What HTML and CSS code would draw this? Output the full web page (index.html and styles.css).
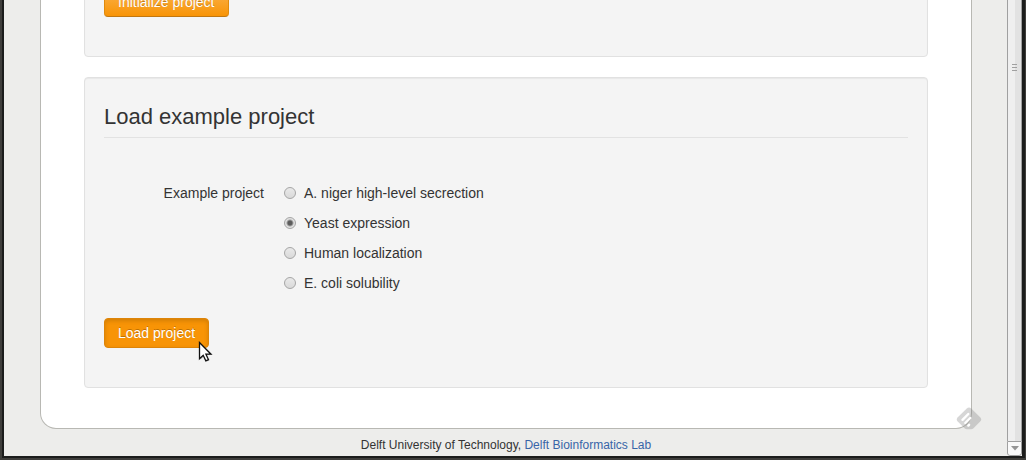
FILE: index.html
```
<!DOCTYPE html>
<html lang="en">
<head>
<meta charset="utf-8">
<title>Load example project</title>
<link rel="stylesheet" href="styles.css">
</head>
<body>
<div class="window">
  <div class="page">
    <main class="card">
      <section class="well">
        <form class="form">
          <button class="btn" type="button">Initialize project</button>
        </form>
      </section>
      <section class="well">
        <form class="form">
          <h2 class="legend">Load example project</h2>
          <div class="control-group" role="radiogroup" aria-labelledby="example-label">
            <div class="control-label" id="example-label">Example project</div>
            <div class="controls">
              <label class="radio"><input type="radio" name="example"> A. niger high-level secrection</label>
              <label class="radio"><input type="radio" name="example" checked> Yeast expression</label>
              <label class="radio"><input type="radio" name="example"> Human localization</label>
              <label class="radio"><input type="radio" name="example"> E. coli solubility</label>
            </div>
          </div>
          <div class="action">
            <button class="btn btn-pressed" type="button">Load project</button>
            <svg class="cursor" width="16" height="22" viewBox="0 0 16 22" aria-hidden="true">
              <path class="cursor-shadow" d="M2.5 2.5V18.5L6.3 15L8.8 20.5L11.5 19.3L9 14H14Z"/>
              <path d="M1.5 1.5V17.8L5.2 14.3L7.8 19.8L10.4 18.6L7.9 13.2H13Z" fill="#fff" stroke="#111" stroke-width="1.3"/>
            </svg>
          </div>
        </form>
      </section>
      <svg class="badge" width="26" height="24" viewBox="0 0 26 24" aria-hidden="true">
        <path d="M10.8 1.5Q13 -.5 15.2 1.5L24.4 10.6Q26 12.5 24.4 14.3L17.5 21.3Q16.5 22.2 15 22.2H11Q9.5 22.2 8.5 21.3L1.500 14.3Q0 12.5 1.5 10.6Z" fill="#777" fill-opacity=".3"/>
        <path d="M6.500 12.800L12.300 7M9.300 16L14.300 11M12.300 18.600L13.100 17.800" stroke="#fff" stroke-width="2.400" stroke-linecap="round" fill="none"/>
      </svg>
    </main>
    <footer class="footer">Delft University of Technology, <a href="#">Delft Bioinformatics Lab</a></footer>
  </div>
  <div class="scrollbar" aria-hidden="true">
    <div class="thumb"><span class="grip"></span></div>
    <div class="arrow"><svg width="8" height="5" viewBox="0 0 8 5"><path d="M0 0H8L4 4.500Z" fill="#969696"/></svg></div>
  </div>
</div>
</body>
</html>
```
FILE: styles.css
```
* { box-sizing: border-box; }

body {
  margin: 0;
  height: 100vh;
  overflow: hidden;
  background: #3f3e3b;
  color: #333;
  font: 14px/20px "Liberation Sans", Arial, sans-serif;
}

.window {
  display: flex;
  height: 100vh;
  padding: 0 1px 2px 2px;
}

.page {
  flex: 1;
  overflow: hidden;
  padding: 0 35px 0 36px;
  border: solid #1c1d1c;
  border-width: 0 0 2px 2px;
  background: #ededeb;
}

.card {
  position: relative;
  margin-top: -33px;
  padding: 0 43px 40px;
  border: 1px solid #b8b8b3;
  border-top: 0;
  border-radius: 0 0 16px 16px;
  background: #fff;
}

.well {
  margin-bottom: 20px;
  padding: 19px;
  border: 1px solid #e1e1e1;
  border-radius: 4px;
  background: #f4f4f4;
  box-shadow: inset 0 1px 1px rgba(0, 0, 0, 0.05);
}

.well:last-of-type { margin-bottom: 0; }

.form { padding-bottom: 20px; }

.legend {
  margin: 0 0 40px;
  border-bottom: 1px solid #e2e2e2;
  font-size: 22px;
  font-weight: 400;
  line-height: 40px;
}

.control-group {
  display: flex;
  gap: 20px;
  margin-bottom: 20px;
}

.control-label {
  width: 160px;
  padding-top: 5px;
  text-align: right;
}

.controls { padding: 5px 0; }

.radio {
  display: flex;
  align-items: center;
  gap: 8px;
  margin-bottom: 10px;
}

.radio:last-child { margin-bottom: 0; }

.radio input {
  appearance: none;
  width: 12px;
  height: 12px;
  margin: 0;
  border: 1px solid #a5a5a5;
  border-radius: 50%;
  background: linear-gradient(#e9e9e9, #d9d9d9);
}

.radio input:checked {
  background: radial-gradient(circle, #5c5c5c 2px, #e2e2e2 4px);
}

.btn {
  display: block;
  padding: 4px 13px;
  border: 1px solid #e08a0c;
  border-bottom-color: #c17710;
  border-radius: 4px;
  background: linear-gradient(#fbb450, #f89406);
  color: #fff;
  font: inherit;
  text-shadow: 0 -1px 0 rgba(0, 0, 0, 0.25);
}

.btn-pressed {
  border-color: #dd8408;
  background: #f89406;
  box-shadow: inset 0 2px 4px rgba(0, 0, 0, 0.15);
}

.action {
  position: relative;
  width: fit-content;
}

.cursor {
  position: absolute;
  right: -5px;
  bottom: -15px;
}

.cursor-shadow { fill: rgba(0, 0, 0, 0.3); }

.badge {
  position: absolute;
  right: -11px;
  bottom: -3px;
}

.footer {
  padding-top: 6px;
  font-size: 12px;
  text-align: center;
}

.footer a {
  color: #3865a8;
  text-decoration: none;
}

.scrollbar {
  display: flex;
  flex-direction: column;
  width: 18px;
  border: solid #1c1d1c;
  border-width: 0 3px 2px 0;
  background: #ededeb;
}

.thumb {
  flex: 1;
  padding-top: 64px;
  border: solid #a0a0a0;
  border-width: 0 1px 0 1px;
  background: linear-gradient(90deg, #efefef 7px, #e2e2e2 7px);
}

.grip {
  display: block;
  width: 5px;
  height: 7px;
  margin: 0 4px;
  background: repeating-linear-gradient(#a0a0a0 0 1px, transparent 1px 3px);
}

.arrow {
  display: flex;
  align-items: center;
  justify-content: center;
  height: 15px;
  border: 1px solid #a0a0a0;
  border-radius: 0 0 3px 3px;
  background: #fafafa;
}
```
